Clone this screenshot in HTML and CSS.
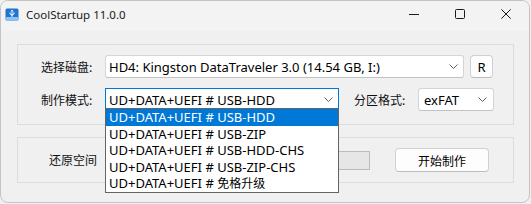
FILE: index.html
```html
<!DOCTYPE html>
<html lang="zh-CN">
<head>
<meta charset="utf-8">
<title>CoolStartup 11.0.0</title>
<link rel="stylesheet" href="styles.css">
</head>
<body>
<div class="window">
  <div class="titlebar">
    <svg class="appicon" width="14" height="13" viewBox="0 0 14 13">
      <rect x="0.5" y="0.5" width="13" height="12" rx="1.5" fill="#1f74d0"/>
      <rect x="0.5" y="9" width="13" height="3.5" rx="1" fill="#8cc2f0"/>
      <path d="M7 2.2v5.6M7 2.2l-1 1.2M7 2.2l1 1.2M5 4.5v1.5l2 1M9 4.2v1.8l-2 1" stroke="#fff" stroke-width="0.9" fill="none"/>
      <circle cx="7" cy="8" r="0.8" fill="#fff"/>
    </svg>
    <span class="title">CoolStartup 11.0.0</span>
    <div class="controls">
      <span class="ctl"><svg width="10" height="10" viewBox="0 0 10 10"><path d="M0 5.5h10" stroke="#1a1a1a" stroke-width="1"/></svg></span>
      <span class="ctl"><svg width="10" height="10" viewBox="0 0 10 10"><rect x="0.5" y="0.5" width="9" height="9" rx="1" stroke="#1a1a1a" stroke-width="1" fill="none"/></svg></span>
      <span class="ctl"><svg width="10" height="10" viewBox="0 0 10 10"><path d="M0.3 0.3l9.4 9.4M9.7 0.3l-9.4 9.4" stroke="#1a1a1a" stroke-width="1"/></svg></span>
    </div>
  </div>
  <div class="client">
    <div class="group g1">
      <div class="row">
        <span class="label">选择磁盘:</span>
        <div class="combo c-disk"><span class="ctext">HD4: Kingston DataTraveler 3.0 (14.54 GB, I:)</span><svg class="chev" width="9" height="5" viewBox="0 0 9 5"><path d="M0.5 0.5l4 4 4-4" stroke="#606060" fill="none"/></svg></div>
        <div class="btn btn-r">R</div>
      </div>
      <div class="row">
        <span class="label">制作模式:</span>
        <div class="combo c-mode focused"><span class="ctext">UD+DATA+UEFI # USB-HDD</span><svg class="chev" width="9" height="5" viewBox="0 0 9 5"><path d="M0.5 0.5l4 4 4-4" stroke="#606060" fill="none"/></svg></div>
        <span class="label label2">分区格式:</span>
        <div class="combo c-fs"><span class="ctext">exFAT</span><svg class="chev" width="9" height="5" viewBox="0 0 9 5"><path d="M0.5 0.5l4 4 4-4" stroke="#606060" fill="none"/></svg></div>
      </div>
    </div>
    <div class="group g2">
      <span class="label label3">还原空间</span>
      <div class="progress"></div>
      <div class="btn btn-start">开始制作</div>
    </div>
    <ul class="dropdown">
      <li class="sel">UD+DATA+UEFI # USB-HDD</li>
      <li>UD+DATA+UEFI # USB-ZIP</li>
      <li>UD+DATA+UEFI # USB-HDD-CHS</li>
      <li>UD+DATA+UEFI # USB-ZIP-CHS</li>
      <li>UD+DATA+UEFI # <span class="cjk">免格升级</span></li>
    </ul>
  </div>
</div>
</body>
</html>
```

FILE: styles.css
```css
html, body {
  margin: 0;
  padding: 0;
  background: #f0f0f0;
}
body {
  font-family: "Noto Sans", "Noto Sans CJK SC", sans-serif;
  color: #000;
}
.window {
  box-sizing: border-box;
  width: 530px;
  height: 203px;
  border: 1px solid #c4c4c4;
  border-radius: 8px;
  background: #f0f0f0;
  overflow: hidden;
}
.titlebar {
  height: 30px;
  display: flex;
  align-items: flex-start;
  background: #f3f3f3;
}
.appicon {
  margin: 7px 0 0 4px;
  flex: none;
}
.title {
  margin: 6px 0 0 7px;
  font-size: 11.5px;
  line-height: 16px;
  color: #1a1a1a;
}
.controls {
  margin-left: auto;
  display: flex;
}
.ctl {
  width: 46px;
  height: 26px;
  display: flex;
  align-items: center;
  justify-content: center;
}
.client {
  position: relative;
  padding: 13px 15px 0 16px;
}
.group {
  box-sizing: border-box;
  border: 1px solid #dcdcdc;
  width: 497px;
}
.g1 {
  height: 81px;
  padding: 10px 0 0 23px;
}
.row {
  display: flex;
  align-items: center;
  height: 23px;
}
.row + .row {
  margin-top: 10px;
}
.label {
  width: 64px;
  flex: none;
  font-size: 12px;
  line-height: 16px;
  font-family: "Noto Sans CJK SC", sans-serif;
  color: #111;
}
.label2 {
  margin-left: 15px;
}
.combo {
  box-sizing: border-box;
  height: 23px;
  background: #fff;
  border: 1px solid #d5d5d5;
  border-bottom-color: #c2c2c2;
  border-radius: 3px;
  display: flex;
  align-items: center;
  padding: 0 5px 0 3px;
  font-size: 13px;
  flex: none;
}
.ctext {
  flex: 1;
  white-space: nowrap;
  overflow: hidden;
  line-height: 18px;
}
.chev {
  flex: none;
}
.c-disk { width: 359px; }
.c-mode {
  width: 234px;
  border-radius: 0;
}
.c-mode.focused {
  border-color: #0078d7;
}
.c-fs {
  width: 76px;
  padding-left: 5px;
  padding-right: 6px;
}
.btn {
  box-sizing: border-box;
  background: #fdfdfd;
  border: 1px solid #d0d0d0;
  border-bottom-color: #bcbcbc;
  border-radius: 4px;
  display: flex;
  align-items: center;
  justify-content: center;
  flex: none;
}
.btn-r {
  width: 23px;
  height: 23px;
  margin-left: 6px;
  font-size: 13px;
}
.g2 {
  margin-top: 12px;
  height: 46px;
  display: flex;
  align-items: center;
  padding-left: 31px;
}
.label3 {
  width: 52px;
}
.progress {
  box-sizing: border-box;
  width: 262px;
  height: 19px;
  margin-left: 7px;
  background: #e6e6e6;
  border: 1px solid #bcbcbc;
}
.btn-start {
  width: 94px;
  height: 24px;
  margin-left: 25px;
  font-size: 12px;
  font-family: "Noto Sans CJK SC", sans-serif;
}
.dropdown {
  position: absolute;
  left: 104px;
  top: 77px;
  box-sizing: border-box;
  width: 234px;
  margin: 0;
  padding: 0;
  list-style: none;
  background: #fff;
  border: 1px solid #646464;
  font-size: 13px;
}
.dropdown li {
  height: 16.5px;
  line-height: 16.5px;
  padding-left: 3px;
  white-space: nowrap;
}
.dropdown li.sel {
  background: #0078d7;
  color: #fff;
}
.cjk {
  font-family: "Noto Sans CJK SC", sans-serif;
  font-size: 12px;
}
```
